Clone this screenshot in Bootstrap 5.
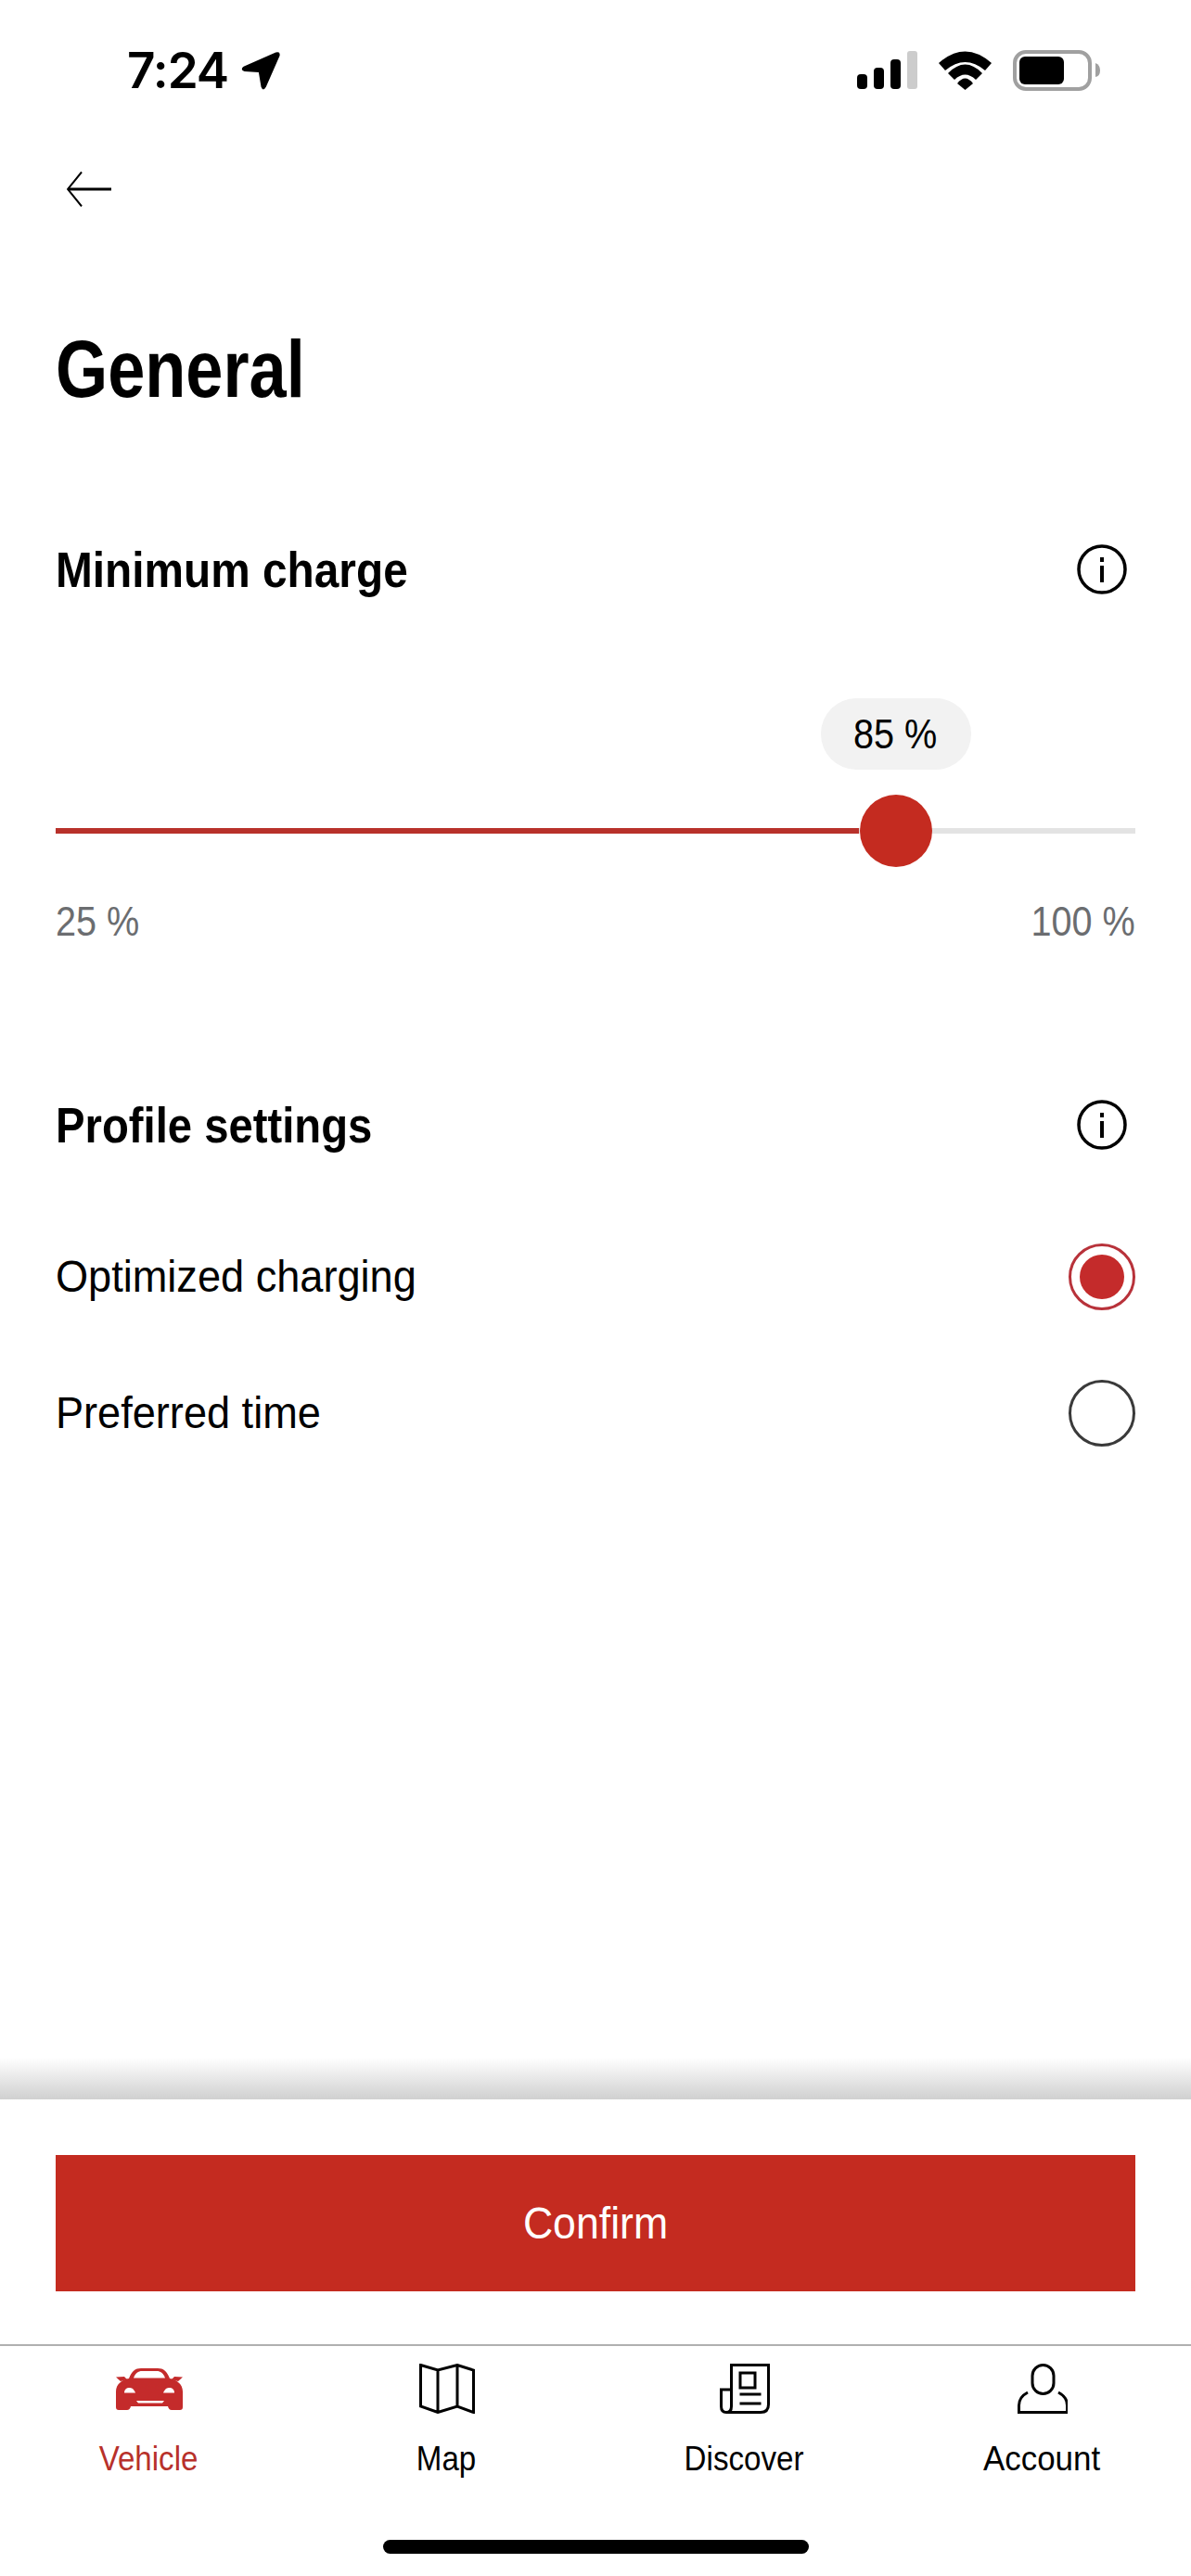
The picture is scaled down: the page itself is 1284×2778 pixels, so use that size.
<!DOCTYPE html>
<html lang="en">
<head>
<meta charset="utf-8">
<title>General</title>
<link href="https://cdn.jsdelivr.net/npm/bootstrap@5.3.0/dist/css/bootstrap.min.css" rel="stylesheet">
<style>
body{font-family:"Liberation Sans",Arial,sans-serif;color:#000;background:#fff}
.nar{display:inline-block;transform-origin:left center}
.nar-mid{transform-origin:center}
.nar-end{transform-origin:right center}
.stat-bar{height:150px;padding:2px 98px 0 137px}
.stat-time{font:600 53px/1 Inter,sans-serif;letter-spacing:-1px}
.stat-arrow{margin-left:13px;width:44px;height:42px}
.back-row{height:108px;padding-left:72px}
.page-title{font-size:88px;line-height:100px;font-weight:700;margin:90px 0 0 60px}
.page-title .nar{transform:scaleX(.82)}
.sec-head{height:60px;padding-right:69px;margin-left:60px}
.sec-title{font-size:54px;line-height:60px;font-weight:700;margin:0}
.sec-title .nar{transform:scaleX(.885)}
.sec-two .sec-title .nar{transform:scaleX(.875)}
.sec-one{margin-top:136px}
.sec-two{margin-top:164px}
.slide-area{position:relative;height:200px;margin:101px 60px 0}
.slide-track{position:absolute;left:0;right:0;top:148px;height:6px;background:#e3e3e3}
.slide-fill{height:100%;background:#b8312b}
.slide-thumb{position:absolute;top:112px;width:78px;height:78px;margin-left:-39px;border-radius:50%;background:#c42b20}
.slide-pill{position:absolute;top:8px;width:162px;height:77px;margin-left:-81px;border-radius:38px;background:#f2f2f2;font-size:44px;line-height:77px;text-align:center}
.slide-pill .nar{transform:scaleX(.9)}
.slide-ends{margin:24px 60px 0;font-size:44px;line-height:50px;color:#6b6d70}
.slide-ends .nar{transform:scaleX(.9)}
.opt-row{height:147px;margin:0 60px;font-size:48px}
.opt-row .nar{transform:scaleX(.94)}
.opt-list{margin-top:60px}
.opt-radio.form-check-input{width:72px;height:72px;margin:0;border:3px solid #3a3a3a;background:#fff;background-image:none;box-shadow:none;float:none}
.opt-radio.form-check-input:checked{border-color:#b8323a;padding:9px;background:#c42b2b content-box;background-image:none}
.foot-shade{height:45px;background:linear-gradient(#fff,#d0d0d0)}
.foot-panel{padding:60px 60px 57px}
.go-btn.btn{display:block;width:100%;height:147px;border:0;border-radius:0;background:#c42b20;color:#fff;font-size:48px;line-height:147px;padding:0}
.go-btn .nar{transform:scaleX(.93)}
.tab-bar{border-top:2px solid #b0b0b0}
.tab-link.nav-link{padding:19px 0 0;color:#000;font-size:36px;line-height:44px}
.tab-link .nar{transform:scaleX(.92)}
.tab-link .nar-wide{transform:scaleX(.97)}
.tab-link.tab-on{color:#b8312b}
.tab-ico{height:54px;margin-bottom:27px}
.home-line{width:459px;height:15px;margin:65px auto 24px;border-radius:8px;background:#000}
</style>
</head>
<body>
<div class="d-flex flex-column min-vh-100">
  <header class="stat-bar d-flex justify-content-between align-items-center">
    <div class="d-flex align-items-center">
      <span class="stat-time">7:24</span>
      <svg class="stat-arrow" viewBox="0 0 41 40" aria-hidden="true"><path d="M36 1.500Q41 0 40 5L26 37Q23 42 21 37L18.500 22L4 21Q-1 19 3 16Z"/></svg>
    </div>
    <div class="d-flex align-items-center" style="gap:23px">
      <svg width="65" height="42" viewBox="0 0 65 42" aria-hidden="true"><rect x="0" y="25" width="11" height="16" rx="4"/><rect x="18" y="18" width="11" height="23" rx="4"/><rect x="36" y="9" width="11" height="32" rx="4"/><rect x="54" y="0" width="11" height="41" rx="3" fill="#ccc"/></svg>
      <svg width="57" height="42" viewBox="0 0 57 42" aria-hidden="true"><path d="M0 13Q28.500 -12 57 13L50 21Q28.500 3 7 21Z"/><path d="M10 24Q28.500 5 47 24L40 31Q28.500 20 17 31Z"/><path d="M20 35Q28.500 24 37 35L28.500 42Z"/></svg>
      <svg width="94" height="44" viewBox="0 0 94 44" aria-hidden="true"><rect x="2" y="2" width="81" height="40" rx="12" fill="none" stroke="#a0a0a0" stroke-width="4"/><rect x="7" y="7" width="48" height="30" rx="6"/><path d="M89 14Q94 16 94 22Q94 28 89 29Z" fill="#a0a0a0"/></svg>
    </div>
  </header>

  <div class="back-row d-flex align-items-center">
    <svg width="48" height="38" viewBox="0 0 48 38" aria-hidden="true"><path d="M48 19H1" fill="none" stroke="#000" stroke-width="3"/><path d="M16 .5 1 19l15 18.500" fill="none" stroke="#000" stroke-width="2"/></svg>
  </div>

  <h1 class="page-title"><span class="nar">General</span></h1>

  <div class="sec-head sec-one d-flex justify-content-between align-items-center">
    <h2 class="sec-title"><span class="nar">Minimum charge</span></h2>
    <svg width="54" height="54" viewBox="0 0 54 54" aria-hidden="true"><circle cx="27" cy="27" r="25" fill="none" stroke="#000" stroke-width="3.500"/><rect x="25" y="23" width="4" height="18"/><rect x="25" y="14" width="4" height="5"/></svg>
  </div>

  <div class="slide-area">
    <div class="slide-track"><div class="slide-fill" style="width:74.400%"></div></div>
    <div class="slide-thumb" style="left:77.800%"></div>
    <div class="slide-pill" style="left:77.800%"><span class="nar nar-mid">85 %</span></div>
  </div>
  <div class="slide-ends d-flex justify-content-between"><span class="nar">25 %</span><span class="nar nar-end">100 %</span></div>

  <div class="sec-head sec-two d-flex justify-content-between align-items-center">
    <h2 class="sec-title"><span class="nar">Profile settings</span></h2>
    <svg width="54" height="54" viewBox="0 0 54 54" aria-hidden="true"><circle cx="27" cy="27" r="25" fill="none" stroke="#000" stroke-width="3.500"/><rect x="25" y="23" width="4" height="18"/><rect x="25" y="14" width="4" height="5"/></svg>
  </div>

  <div class="opt-list">
    <label class="opt-row d-flex justify-content-between align-items-center">
      <span class="nar">Optimized charging</span>
      <input class="form-check-input opt-radio" type="radio" name="profile" checked>
    </label>
    <label class="opt-row d-flex justify-content-between align-items-center">
      <span class="nar">Preferred time</span>
      <input class="form-check-input opt-radio" type="radio" name="profile">
    </label>
  </div>

  <footer class="mt-auto">
    <div class="foot-shade"></div>
    <div class="foot-panel"><button type="button" class="btn go-btn"><span class="nar nar-mid">Confirm</span></button></div>
    <nav class="nav nav-justified tab-bar">
      <a class="nav-link tab-link tab-on" href="#">
        <div class="tab-ico d-flex justify-content-center">
          <svg class="mt-1" width="72" height="46" viewBox="0 0 72 46" aria-hidden="true"><path fill="#c42b2b" fill-rule="evenodd" d="M14 12C17 4 21 1 27 1H45C51 1 55 4 58 12C65 13 72 18 72 26V43Q72 46 69 46H60Q57 46 56 42H16Q15 46 12 46H3Q0 46 0 43V26C0 18 7 13 14 12ZM19 11.500H53C51 6 48 4 44 4H28C24 4 21 6 19 11.500ZM9 27.500H21C20 25 18 22 15 22C11 22 9 24 9 27.500ZM63 27.500H51C52 25 54 22 57 22C61 22 63 24 63 27.500ZM22 36H52L50 38.500H24Z"/><path fill="#c42b2b" d="M0 10.500 9 10l3 3-7 2ZM72 10.500 63 10l-3 3 7 2Z"/></svg>
        </div>
        <span class="nar nar-mid">Vehicle</span>
      </a>
      <a class="nav-link tab-link" href="#">
        <div class="tab-ico d-flex justify-content-center">
          <svg width="60" height="54" viewBox="0 0 60 54" aria-hidden="true"><path d="M1.500 1.500 20 7 41 1.500 58.500 7V52.500L41 46 20 52.500 1.500 46ZM20 7V52.500M41 1.500V46" fill="none" stroke="#000" stroke-width="3"/></svg>
        </div>
        <span class="nar nar-mid">Map</span>
      </a>
      <a class="nav-link tab-link" href="#">
        <div class="tab-ico d-flex justify-content-center">
          <svg width="54" height="54" viewBox="0 0 54 54" aria-hidden="true"><g fill="none" stroke="#000" stroke-width="3"><path d="M12.500 46V1.500H52.500V44Q52.500 52.500 44 52.500H7Q1.500 52.500 1.500 46V28H12.500M7 52.500Q12.500 52.500 12.500 46"/><rect x="22" y="10" width="16" height="16"/><path d="M21.500 33H44.500M21.500 43H44.500"/></g></svg>
        </div>
        <span class="nar nar-mid">Discover</span>
      </a>
      <a class="nav-link tab-link" href="#">
        <div class="tab-ico d-flex justify-content-center">
          <svg width="54" height="54" viewBox="0 0 54 54" aria-hidden="true"><g fill="none" stroke="#000" stroke-width="3"><rect x="16" y="1.500" width="23" height="31" rx="11.500"/><path d="M11 31Q1.500 36 1.500 45V52.500H53.500V45Q53.500 36 44 31"/></g></svg>
        </div>
        <span class="nar nar-mid nar-wide">Account</span>
      </a>
    </nav>
    <div class="home-line"></div>
  </footer>
</div>
<script src="https://cdn.jsdelivr.net/npm/bootstrap@5.3.0/dist/js/bootstrap.bundle.min.js"></script>
</body>
</html>
